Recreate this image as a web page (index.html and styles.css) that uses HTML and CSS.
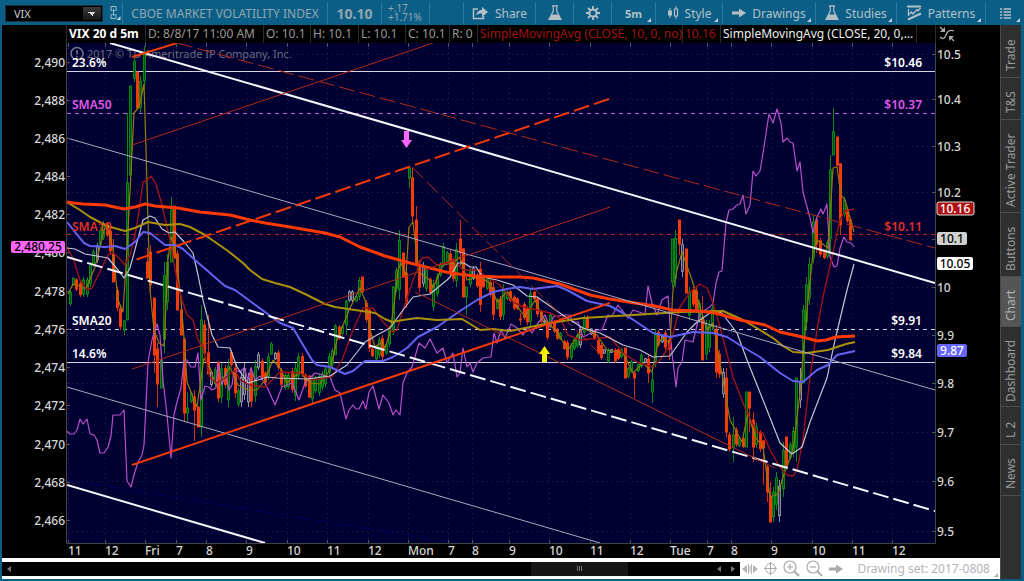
FILE: index.html
```
<!DOCTYPE html>
<html lang="en">
<head>
  <meta charset="UTF-8" />
  <meta name="viewport" content="width=device-width, initial-scale=1.0"/>
  <title>VIX Chart</title>
  <link rel="stylesheet" href="styles.css">
</head>
<body>
  <header class="toolbar">
    <div class="symbol">
      <select class="symbol-select" aria-label="Symbol">
        <option>VIX</option>
      </select>
      <button class="link-btn" aria-label="Link symbol">
        <svg width="12" height="16" viewBox="0 0 12 16" fill="none" stroke="#9dbccb">
          <path d="M3.500 5.500h-1.500v-4h5v4h-1.500M3.500 9.500h-1.500v4h5v-4h-1.500M4.500 4v7"/>
          <path d="M11.500 11v4h-4z" fill="#c4d3da" stroke="none"/>
        </svg>
      </button>
    </div>
    <div class="cell company">CBOE MARKET VOLATILITY INDEX</div>
    <div class="cell last">10.10</div>
    <div class="cell change"><span>+.17</span><span>+1.71%</span></div>
    <div class="cell"></div>
    <button class="cell tool">
      <svg width="17" height="14" viewBox="0 0 17 14" fill="none" stroke="#b4c0c6" stroke-width="1.5">
        <path d="M6 3H1.500v9.500h10V10"/>
        <path d="M4 9.500C5 5.500 7 4 10 4V1l6 5-6 5V7.500C7 7.500 5.500 8 4 9.500z" fill="#b4c0c6" stroke="none"/>
      </svg>
      Share
    </button>
    <button class="cell tool" aria-label="Studies setup">
      <svg width="14" height="16" viewBox="0 0 14 16" fill="none" stroke="#b4c0c6" stroke-width="1.2">
        <path d="M4 .8h6M5.300 1v5L1 14.500h12L8.700 6V1"/>
        <path d="M4 9.500h6l3 5.500H1z" fill="#b4c0c6" stroke="none"/>
      </svg>
    </button>
    <button class="cell tool" aria-label="Settings">
      <svg width="14" height="14" viewBox="0 0 14 14" fill="none" stroke="#b4c0c6">
        <circle cx="7" cy="7" r="3.600" stroke-width="2"/>
        <path d="M7 0v3M7 11v3M0 7h3M11 7h3M2 2l2.200 2.200M9.800 9.800L12 12M12 2L9.800 4.200M4.200 9.800L2 12" stroke-width="1.800"/>
      </svg>
    </button>
    <button class="cell tool more strong">5m</button>
    <button class="cell tool more">
      <svg width="12" height="14" viewBox="0 0 12 14" fill="none" stroke="#b4c0c6">
        <path d="M3 2v10M9 0v3M9 10v3"/>
        <path d="M1 4.500h4v5H1z" fill="#b4c0c6" stroke="none"/>
        <path d="M7.500 3h3v7h-3z" stroke-width="1.200"/>
      </svg>
      Style
    </button>
    <button class="cell tool more">
      <svg width="14" height="10" viewBox="0 0 14 10"><path d="M0 3.500h7V.5L14 5 7 9.500v-3H0z" fill="#b4c0c6"/></svg>
      Drawings
    </button>
    <button class="cell tool more">
      <svg width="14" height="16" viewBox="0 0 14 16" fill="none" stroke="#b4c0c6" stroke-width="1.2">
        <path d="M4 .8h6M5.300 1v5L1 14.500h12L8.700 6V1"/>
        <path d="M4 9.500h6l3 5.500H1z" fill="#b4c0c6" stroke="none"/>
      </svg>
      Studies
    </button>
    <button class="cell tool more">
      <svg width="15" height="16" viewBox="0 0 15 16" fill="none" stroke="#b4c0c6">
        <path d="M0 1.500h14" stroke-width="2"/>
        <path d="M1.500 4v6l3-3 1.500 2 4-4.500 1 1.500 2.500-3" stroke-width="1.300"/>
        <path d="M1 14.500L14 8.500" stroke-width="2"/>
      </svg>
      Patterns
    </button>
    <button class="cell tool more" aria-label="Menu">
      <svg width="11" height="11" viewBox="0 0 11 11" stroke="#b4c0c6" stroke-width="1.500"><path d="M0 1h2M0 4h2M0 7h2M0 10h2M3.500 1H11M3.500 4H11M3.500 7H11M3.500 10H11"/></svg>
    </button>
  </header>

  <div class="workspace">
    <main class="chart-panel">
      <div class="study-bar">
        <b class="title">VIX 20 d 5m</b>
        <span>D: 8/8/17 11:00 AM</span>
        <span>O: 10.1</span>
        <span>H: 10.1</span>
        <span>L: 10.1</span>
        <span>C: 10.1</span>
        <span>R: 0</span>
        <span class="sma10">SimpleMovingAvg (CLOSE, 10, 0, no)</span>
        <span class="sma10">10.16</span>
        <span class="sma20">SimpleMovingAvg (CLOSE, 20, 0,...</span>
        <span></span>
        <button class="fit-btn" aria-label="Fit chart">
          <svg width="17" height="16" viewBox="0 0 17 16" fill="none" stroke="#aaa" stroke-width="1.300">
            <path d="M1 11c3 3 5 1 6-2s3-6 8-4M1 1l4 4M15 15l-4-4"/>
            <path d="M6 1v5H1zM10 10h5l-5 5z" fill="#aaa" stroke="none"/>
          </svg>
        </button>
      </div>

      <svg class="chart" viewBox="2 43 998 515" role="img" aria-label="VIX five minute chart">
        <defs>
          <clipPath id="plot"><rect x="67" y="43" width="868" height="500"/></clipPath>
        </defs>
        <rect class="plot-bg" x="67" y="43" width="868" height="500"/>
        <g id="grid" class="grid"></g>
        <circle cx="77" cy="53.500" r="6" class="notice-ring"/>
        <path d="M77 50v4.500M77 56v1.500" class="notice-ring"/>
        <text class="copyright" x="87" y="58">2017 © TD Ameritrade IP Company, Inc.</text>

        <g clip-path="url(#plot)">
          <path class="level violet dash" d="M67 113.500H935"/>
          <path class="level red dash" d="M67 234.500H935"/>
          <path class="level dash" d="M67 329.500H935"/>
          <path class="level" d="M67 71.500H935M67 362.500H935"/>
          <path class="faint" d="M67 480L470 545"/>
          <g id="candles"></g>
          <g id="studies"></g>
          <path class="trend thin" d="M67 138L935 390M67 387L600 543"/>
          <path class="trend" d="M110 43L935 283M67 485L265 543"/>
          <path class="trend mid" d="M67 257L935 511"/>
          <path class="fork thin" d="M132 145L433 43M132 369L610 207M415 292L775 468"/>
          <path class="fork" d="M132 57L177 43M132 465L610 303"/>
          <path class="fork long" d="M609 99L132 261"/>
          <path class="fork thin long" d="M177 43L935 248M412 167L606 360"/>
        </g>
        <path fill="#ff66ff" d="M404 131h5v9h3l-5.500 8-5.500-8h3z"/>
        <path fill="#f4ee00" d="M542 362h5v-8h3l-5.500-8-5.500 8h3z"/>

        <g class="level-text">
          <text x="72" y="67">23.6%</text>
          <text x="72" y="109" class="t-violet">SMA50</text>
          <text x="72" y="231" class="t-red">SMA10</text>
          <text x="72" y="325">SMA20</text>
          <text x="72" y="358">14.6%</text>
        </g>
        <g class="level-text end">
          <text x="922" y="67">$10.46</text>
          <text x="922" y="109" class="t-violet">$10.37</text>
          <text x="922" y="231" class="t-red">$10.11</text>
          <text x="922" y="325">$9.91</text>
          <text x="922" y="358">$9.84</text>
        </g>
        <g id="axes" class="axis"></g>
        <path class="frame" d="M66.500 43V543.500H935.500V43"/>
        <g class="badges">
          <rect x="11" y="241" width="54" height="12" rx="2" fill="#ff66ff"/>
          <text x="38" y="251" fill="#000">2,480.25</text>
          <rect x="937" y="202" width="37" height="13" rx="2" fill="#b01010" stroke="#ddd"/>
          <text x="955" y="213" fill="#fff">10.16</text>
          <rect x="937" y="232" width="30" height="13" rx="2" fill="#d0d0d0"/>
          <text x="952" y="243" fill="#000">10.1</text>
          <rect x="937" y="257" width="36" height="13" rx="2" fill="#fff"/>
          <text x="955" y="268" fill="#000">10.05</text>
          <rect x="937" y="344" width="30" height="13" rx="2" fill="#6666ff"/>
          <text x="952" y="355" fill="#fff">9.87</text>
        </g>
      </svg>

      <footer class="bottom-bar">
        <div class="scroll">
          <button class="scroll-btn" aria-label="First"><svg width="5" height="6"><path d="M4 0v6L0 3z" fill="#777"/></svg></button>
          <div class="track"><div class="thumb"><i></i><i></i><i></i></div></div>
          <button class="scroll-btn" aria-label="Back"><svg width="5" height="6"><path d="M4 0v6L0 3z" fill="#777"/></svg></button>
          <button class="scroll-btn" aria-label="Forward"><svg width="5" height="6"><path d="M0 0v6l4-3z" fill="#777"/></svg></button>
        </div>
        <div class="zoom-tools">
          <button aria-label="Pan"><svg width="16" height="10" viewBox="0 0 16 10" fill="#b4b4b4"><path d="M5 1v8L0 5zM11 1v8l5-4zM6 0h1v10H6zM9 0h1v10H9zM7.500 2h1v6h-1z"/></svg></button>
          <button aria-label="Crosshair"><svg width="13" height="13" viewBox="0 0 13 13" fill="none" stroke="#aaa"><circle cx="6.500" cy="6.500" r="5"/><path d="M6.500 0v13M0 6.500h13"/></svg></button>
          <button aria-label="Zoom in"><svg width="17" height="17" viewBox="0 0 17 17" fill="none" stroke="#aaa" stroke-width="1.200"><circle cx="7" cy="7" r="6"/><path d="M7 4v6M4 7h6"/><path d="M11.500 11.500L16 16" stroke-width="2"/></svg></button>
          <button aria-label="Zoom out"><svg width="17" height="17" viewBox="0 0 17 17" fill="none" stroke="#aaa" stroke-width="1.200"><circle cx="7" cy="7" r="6"/><path d="M4 7h6"/><path d="M11.500 11.500L16 16" stroke-width="2"/></svg></button>
          <button aria-label="Go to latest"><svg width="14" height="10" viewBox="0 0 14 10"><path d="M0 3.500h7V.5L14 5 7 9.500v-3H0z" fill="#aaa"/></svg></button>
          <button class="drawing-set more">Drawing set: 2017-0808</button>
        </div>
      </footer>
    </main>

    <nav class="side-tabs">
      <button class="h-trade">Trade</button>
      <button class="h-ts">T&amp;S</button>
      <button class="h-active">Active Trader</button>
      <button class="h-buttons">Buttons</button>
      <button class="h-chart selected">Chart</button>
      <button class="h-dash">Dashboard</button>
      <button class="h-l2">L 2</button>
      <button class="h-news">News</button>
    </nav>
  </div>

  <script src="chart.js"></script>
</body>
</html>
```
FILE: styles.css
```
* {
  box-sizing: border-box;
}

body {
  margin: 0;
  min-height: 100vh;
  display: flex;
  flex-direction: column;
  background: #0b5f87;
  font-family: "Noto Sans", "Open Sans", sans-serif;
  font-size: 12px;
}

button {
  margin: 0;
  padding: 0;
  border: none;
  background: none;
  color: inherit;
  font: inherit;
}

svg {
  display: block;
  flex: none;
}

.toolbar {
  display: grid;
  grid-template-columns: 122px 205px 54px 48px 1fr 72px 38px 38px 44px 67px 93px 81px 89px 39px;
  height: 25px;
  padding: 2px 0 1px;
  color: #b4c0c6;
}

.symbol {
  display: flex;
  align-items: center;
  gap: 6px;
  padding-left: 5px;
}

/* first layer is the down arrow, second its button */
.symbol-select {
  appearance: none;
  width: 98px;
  height: 17px;
  padding: 0 8px;
  border: 1px solid #1c2f38;
  border-radius: 0;
  background-color: #000;
  background-image: conic-gradient(from -45deg at 50% 100%, #ddd 90deg, transparent 0), linear-gradient(#3a3a3a, #161616);
  background-repeat: no-repeat;
  background-size: 8px 4px, 18px 13px;
  background-position: 82px 6px, 77px 1px;
  color: #ccc;
  font: inherit;
  font-size: 11px;
}

.cell {
  display: flex;
  align-items: center;
  justify-content: center;
  gap: 6px;
  border-left: 1px solid #2d7899;
  white-space: nowrap;
}

.company,
.last,
.change {
  color: #93a5ae;
}

.last {
  font-size: 14px;
  font-weight: bold;
}

.change {
  flex-direction: column;
  align-items: flex-start;
  gap: 0;
  padding-left: 6px;
  font-size: 10px;
  line-height: 9px;
}

.strong {
  font-size: 11px;
  font-weight: bold;
}

.more {
  position: relative;
}

.more::after {
  content: "";
  position: absolute;
  right: 4px;
  bottom: 2px;
  border-left: 4px solid transparent;
  border-bottom: 4px solid #c4d0d6;
}

.workspace {
  flex: 1;
  display: flex;
  padding: 0 3px 2px 2px;
}

.chart-panel {
  flex: 1;
  min-width: 0;
  background: #000;
}

.study-bar {
  display: grid;
  grid-template-columns: 79px 118px 47px 48px 47px 44px 28px 205px 38px 196px 1fr 65px;
  height: 18px;
  padding-left: 64px;
  color: #999;
  line-height: 18px;
  white-space: nowrap;
}

.study-bar > * {
  padding-left: 2px;
  border-left: 1px solid #2c2c2c;
}

.title {
  color: #fff;
}

.study-bar .sma10 {
  color: #a01414;
}

.study-bar .sma20 {
  color: #eee;
}

.fit-btn {
  display: flex;
  align-items: center;
  padding-left: 3px;
}

.chart {
  width: 100%;
  height: auto;
  overflow: visible;
}

.plot-bg {
  fill: #000033;
}

.grid path {
  fill: none;
  stroke: #252540;
  stroke-dasharray: 1 4;
}

.notice-ring {
  fill: none;
  stroke: #777788;
  stroke-width: 1.5;
}

.copyright {
  fill: #6c6c80;
  font-size: 11px;
}

.level {
  stroke: #d4d4e0;
}

.level.violet {
  stroke: #c456d0;
}

.level.red {
  stroke: #c02418;
}

.level.dash {
  stroke-dasharray: 4 4;
}

.faint {
  stroke: #000058;
  stroke-dasharray: 16 5;
}

.trend {
  fill: none;
  stroke: #f4f4fa;
  stroke-width: 2;
}

.trend.thin {
  stroke: #a8a8bc;
  stroke-width: 1;
}

.trend.mid {
  stroke-dasharray: 16 5;
}

.fork {
  fill: none;
  stroke: #f03a08;
  stroke-width: 2;
}

.fork.thin {
  stroke: #b02c18;
  stroke-width: 1;
}

.fork.long {
  stroke-dasharray: 16 5;
}

.study {
  fill: none;
  stroke-linejoin: round;
}

.level-text,
.badges {
  font-size: 12px;
  font-weight: 600;
  fill: #fff;
}

.end {
  text-anchor: end;
}

.level-text .t-violet {
  fill: #e05ae8;
}

.level-text .t-red {
  fill: #e03020;
}

.badges {
  font-weight: 500;
  text-anchor: middle;
}

.axis {
  fill: #d6d6d6;
  font-size: 12px;
  font-weight: 500;
}

.frame {
  fill: none;
  stroke: #444;
}

.bottom-bar {
  display: flex;
  align-items: center;
  height: 21px;
  background: #fff;
}

.scroll {
  flex: 1;
  display: flex;
  align-items: center;
  height: 14px;
  background: #000;
}

.scroll-btn {
  width: 14px;
  display: flex;
  justify-content: center;
}

.track {
  flex: 1;
  height: 14px;
}

.thumb {
  display: flex;
  align-items: center;
  justify-content: center;
  gap: 1px;
  width: 14%;
  height: 14px;
  margin-left: 74%;
  background: #161616;
}

.thumb i {
  width: 1px;
  height: 5px;
  background: #777;
}

.zoom-tools {
  display: flex;
  align-items: center;
  gap: 6px;
  width: 260px;
  padding-left: 2px;
  color: #b4b4b4;
}

.drawing-set {
  flex: 1;
  padding-right: 10px;
  text-align: right;
  white-space: nowrap;
}

.drawing-set::after {
  right: 2px;
  bottom: 0;
  border-bottom-color: #aaa;
}

.side-tabs {
  display: flex;
  flex-direction: column;
  width: 21px;
  border-left: 1px solid #4a4a4a;
  background: #2f2f2f;
  color: #9a9a9a;
}

/* tabs read bottom to top, so borders and padding are flipped too */
.side-tabs button {
  writing-mode: vertical-rl;
  transform: rotate(180deg);
  width: 20px;
  padding-bottom: 8px;
  border-top: 1px solid #4d4d4d;
  line-height: 18px;
  text-align: center;
  white-space: nowrap;
}

.side-tabs .selected {
  background: #555;
  color: #b0b0b0;
}

.h-trade { height: 53px; }
.h-ts { height: 42px; }
.h-active { height: 93px; }
.h-buttons { height: 64px; }
.h-chart { height: 50px; }
.h-dash { height: 80px; }
.h-l2 { height: 38px; }
.h-news { height: 51px; }
```
FILE: chart.js
```
const svgNS = "http://www.w3.org/2000/svg";

function add(parent, name, attrs, text) {
  const el = document.createElementNS(svgNS, name);
  for (const key in attrs) el.setAttribute(key, attrs[key]);
  if (text) el.textContent = text;
  document.getElementById(parent).appendChild(el);
}

// time axis: [x, label]
const times = [
  [68, "11"], [105, "12"], [145, "Fri"], [176, "7"], [206, "8"], [246, "9"], [287, "10"], [327, "11"],
  [368, "12"], [408, "Mon"], [448, "7"], [472, "8"], [509, "9"], [549, "10"], [590, "11"], [630, "12"],
  [670, "Tue"], [707, "7"], [731, "8"], [771, "9"], [812, "10"], [852, "11"], [892, "12"]
];

// price axis on the right: [y, label]
const prices = [
  [54, "10.5"], [99, "10.4"], [146, "10.3"], [192, "10.2"], [239, ""], [287, "10"],
  [335, "9.9"], [383, "9.8"], [432, "9.7"], [481, "9.6"], [531, "9.5"]
];

// futures axis on the left
const futures = [
  [62, "2,490"], [100, "2,488"], [138, "2,486"], [176, "2,484"], [214, "2,482"], [252, "2,480"], [291, "2,478"],
  [329, "2,476"], [367, "2,474"], [405, "2,472"], [444, "2,470"], [482, "2,468"], [520, "2,466"]
];

times.forEach(([x, label]) => {
  add("grid", "path", { d: `M${x + 0.5} 43V543` });
  add("axes", "path", { d: `M${x + 0.5} 43v4M${x + 0.5} 540v3`, stroke: "#555" });
  add("axes", "text", { x: x, y: 555 }, label);
});
prices.forEach(([y, label]) => {
  add("grid", "path", { d: `M67 ${y + 0.5}H935` });
  add("axes", "path", { d: `M932 ${y + 0.5}h3`, stroke: "#555" });
  if (label) add("axes", "text", { x: 937, y: y + 5 }, label);
});
futures.forEach(([y, label]) => {
  add("axes", "path", { d: `M67 ${y + 0.5}h3`, stroke: "#555" });
  add("axes", "text", { x: 65, y: y + 5, "text-anchor": "end" }, label);
});

// candles: x, colour, high, low and, where known, body top and bottom
const candles = `
70g290,306 73g277,286 76r278,291 80r281,297 83g277,297 87g277,297 90g262,287 93g249,267 97w243,263 100g228,247
103g221,240 107r223,237 110r227,255 113r239,282,254,282 117r287,311 120r305,330 124g320,335,321,330
127g113,320,183,320 130g86,175,86,175 134g58,82 137r72,108,72,108 140g76,113 144g46,87 147r248,278,262,278 150r245,292
154r298,373,298,355 157r343,407,349,384 161g350,388,360,388 164g262,353 167g254,310 171g197,262,210,262
174r206,258,206,258 177r250,310,254,310 181r310,335,310,335 184r339,422,339,413 187g392,422,408,413 191g392,403
194r390,441,397,410 198r407,427,407,427 201g305,437,320,427 204r320,353,325,353 208r315,374,353,374
211w370,387 215g367,387 218r362,402,362,398 221g363,403 225r365,388 228g359,407 231r350,367 235r363,398
238g388,407 241w372,407 244w363,400 248w373,407 251r367,407 255g360,402 258w352,370 262r358,380 265r371,384 268g353,380
271g342,355,344,354 275w352,360 278r350,370 281r368,387 285g373,390 288g373,389 292r368,393 295g363,401 298g353,380
302r353,377 305r373,388 309r375,398,376,397 312g375,403 315g376,393 319g373,396 322g371,390 325g366,387 329g353,376
332g348,367 335g324,355,326,355 339r325,340 342g325,335 346g300,335,301,325 349w290,302 352w290,302 356g296,302
359g277,300 362r277,292,277,292 366r300,323 369r310,352,310,348 372r348,357 376g346,361 379g337,358 382r335,360
386g343,355 389g326,347 393g286,335,287,330 396g267,292 399g230,300 403r253,277,253,277 406r267,308 409g168,188,168,178
412r168,222,178,216 416r206,266,220,263 419r260,292 423w262,287 426g267,292 430r277,295 433g280,311 437g273,297 440g262,277
443g243,267 447g251,263 450r250,277 453r258,282 456g243,287 460r220,266,239,253 463r248,297,249,297 466g287,315,287,297
470g268,287 473w267,280 477r273,288 480r262,312 483r277,288 487g277,290 490r280,297 493r282,320 497g298,310 500r296,320
503g284,320 507g291,300 510r290,302 514r295,310 517r297,310 520r313,325,319,320 524r302,320 527r306,325 530g288,327
534r291,300 537r296,317 541r310,323 544w318,326,321,322 547r320,340 550g313,328 554r320,333 557r328,340 560g332,340 564r340,350
567r340,360 571g343,360 574g338,350 577g333,348 580w327,348 584g315,335 587r315,330 591w328,335 594r330,340 598r338,355
601r343,360 604w349,354 608g348,363 611w349,353 615r348,363 618r348,360 621g348,358 625r348,378,348,378 628g367,378 631g360,373
634r373,398,373,378 638g363,372 641g353,368 645w358,363 648r355,383,359,373 652g365,403,380,392 655g329,367 658r330,347
662w335,343 665r330,350 669r337,360,340,349 672g239,287,239,282 675g230,287 679r220,255,220,244 682w239,277 686r249,293,249,293
689g287,320 693r287,307 696r287,313 699g300,323 702r296,360,318,360 706g320,360 709g320,352 712g305,330 716r325,378,330,372
719r350,378 723w368,398 726r368,437,378,432 729r432,452 733g417,462,435,447 736r427,447 739g437,447 743r437,448
746g392,447,392,447 749r392,432,392,408 753r412,462,420,447 756g423,448 760r430,452 763r440,485,441,448 767r465,502,467,492
770r482,522,496,522 773g487,522 776g472,510 779w480,522 783g442,497 786r437,467,437,467 790g442,460 793g427,457
796g378,462,378,447 800w368,408,383,400 803g305,383,310,383 806g277,330 809g257,305 813g215,263,222,258 816r217,253,220,244
820r238,257 824r249,259 827g240,259 830g155,253 833g108,155,132,155 837r137,167,137,165 840r163,235,164,225 844g197,217
847r207,223 850r217,240,220,240`.trim().split(/\s+/);

const colours = { g: "#0aa014", r: "#f53a08", w: "#a8a8b8" };

candles.forEach(item => {
  const [, x, type, rest] = item.match(/^(\d+)([grw])(.+)$/);
  const [high, low, t, b] = rest.split(",").map(Number);
  const inset = (low - high) * 0.15;
  const top = t || high + inset;
  const bottom = b || low - inset;
  const cx = Number(x) + 0.5;
  add("candles", "path", { d: `M${cx} ${high}V${low}`, stroke: colours[type], opacity: 0.85 });
  add("candles", "rect", {
    x: cx - 1, y: top, width: 2, height: Math.max(1, bottom - top),
    fill: type === "g" ? "#024a10" : type === "w" ? "#333350" : colours.r,
    stroke: colours[type], "stroke-width": type === "r" ? 1 : 0.8
  });
});

const studies = [
  // futures overlay
  ["#b850c8", 1.2, `67,431 70,434 74,434 77,430 80,419 83,424 87,419 90,434 94,435 97,440 100,453 104,453 108,447 111,436
  113,415 120,415 124,410 127,481 131,487 134,475 138,462 142,455 144,445 146,405 148,362 152,340 157,324 160,335 163,380
  167,415 171,458 174,415 177,402 181,388 184,360 187,360 191,367 195,367 198,353 201,400 205,386 209,387 212,390 216,388
  218,363 222,385 226,372 229,390 232,385 234,370 240,372 244,368 248,380 251,368 255,380 260,376 267,387 275,405 282,387
  292,383 299,400 305,383 315,373 330,377 335,390 340,393 346,419 349,410 353,405 356,409 359,409 363,401 366,409 369,392
  373,386 379,409 383,395 389,403 393,415 396,410 400,415 403,383 407,373 412,367 419,343 425,348 430,339 437,353 443,348
  447,363 453,353 457,377 460,373 463,348 467,367 470,363 473,372 477,363 483,358 491,357 494,333 497,343 501,330 505,338
  511,324 517,328 523,335 528,327 532,333 538,323 545,315 550,327 553,317 563,315 570,315 572,322 578,322 583,337 597,330
  602,330 608,315 612,316 618,305 628,318 633,310 645,314 648,286 652,303 657,315 662,300 668,296 672,353 676,387 678,368
  682,362 685,340 693,342 700,313 710,307 713,303 716,283 719,272 722,271 726,223 729,210 733,209 737,205 740,204 743,195
  746,214 750,205 753,171 756,176 760,171 763,153 769,114 773,123 777,109 781,123 783,142 787,138 790,142 793,143 797,171
  800,162 803,192 807,207 810,218 813,233 817,217 821,209 823,214 827,204 830,257 834,267 837,266 840,248 844,237 847,242
  851,243 854,247`],
  // fast average
  ["#937c08", 1.2, `68,294 73,284 80,286 86,289 95,267 104,230 108,225 113,250 118,300 123,312 127,250 134,113 139,107
  144,84 146,150 150,290 154,330 159,343 164,346 168,260 171,237 175,247 181,300 185,350 187,382 197,407 204,358 210,368
  215,383 222,380 230,367 238,385 248,390 257,390 265,380 273,360 280,368 287,383 300,372 310,383 320,384 330,370 337,340
  350,308 360,288 365,300 370,330 375,347 382,342 385,348 390,333 395,297 398,270 401,263 406,275 409,227 413,222 417,257
  420,273 430,280 433,288 443,265 453,263 460,257 467,280 480,277 490,283 497,302 507,292 525,317 535,300 543,318 557,332
  568,350 583,328 597,335 607,350 623,353 633,373 643,363 652,372 658,343 663,338 670,343 673,290 677,270 682,252 692,280
  700,307 707,330 713,323 720,363 730,420 742,442 748,413 755,437 763,447 770,497 778,494 783,477 793,450 800,393 807,310
  813,253 817,240 828,248 833,168 837,167 841,195 845,200 854,232`],
  // 10 bars
  ["#9c1414", 1.4, `67,247 73,258 80,280 87,290 92,288 103,265 108,255 113,253 119,258 125,265 130,255 135,235 138,218
  143,182 147,180 151,176 156,184 162,205 170,240 177,280 182,300 187,315 193,320 198,340 203,347 210,378 217,383 225,378
  235,370 240,380 250,385 265,387 280,372 300,373 313,380 332,377 342,360 353,330 363,308 373,308 383,322 393,332 397,330
  403,310 413,280 422,258 428,257 437,265 447,263 453,260 463,270 477,270 487,277 500,285 513,302 523,307 533,309 550,313
  560,318 568,335 580,340 610,337 623,353 637,362 652,367 660,360 670,345 680,307 690,292 700,284 707,288 713,303 720,327
  733,377 747,413 757,432 763,433 770,450 780,467 787,475 793,476 797,470 803,440 810,377 817,330 823,297 832,257 840,220
  845,211 854,209`],
  // 20 bars
  ["#c4c4d0", 1.2, `67,248 75,249 85,254 108,258 118,270 124,278 130,268 143,220 150,216 155,218 162,229 169,233 175,232
  185,243 193,253 198,275 203,300 212,335 218,347 230,348 237,367 248,383 258,380 267,377 277,378 307,379 330,376 347,365
  365,342 377,335 390,328 403,310 413,297 430,294 447,280 450,277 458,263 464,263 470,267 476,267 483,277 497,280 513,285
  527,296 537,297 567,318 583,328 600,333 623,345 640,350 653,357 670,356 687,332 697,322 713,311 722,313 737,333 747,360
  763,400 780,443 792,454 802,447 810,422 827,378 835,340 847,290 854,264`],
  // 50 bars
  ["#6262f0", 2, `67,222 75,232 84,243 90,246 105,247 115,246 125,249 135,242 143,232 150,233 165,245 175,245 183,249
  195,260 225,286 235,290 250,301 280,323 293,328 312,360 317,365 330,367 345,374 353,371 365,361 383,361 393,357 407,348
  418,337 437,327 460,311 477,300 493,292 507,289 520,287 533,289 557,286 567,290 587,301 610,306 623,313 653,333 670,337
  693,332 713,333 727,337 743,347 760,357 780,373 793,381 803,382 817,370 828,365 837,355 846,353 855,351`],
  // 100 bars
  ["#ac9008", 2, `67,202 80,210 90,217 107,226 125,231 135,228 148,222 165,225 180,224 190,227 205,235 228,251 243,263
  250,270 262,279 275,283 290,287 305,294 325,304 335,307 355,310 375,313 385,319 392,322 403,320 417,318 437,320 462,319
  480,330 493,329 510,331 520,329 550,323 583,318 633,315 680,312 723,311 743,320 760,330 773,338 783,346 793,352 807,353
  828,350 837,347 846,344 855,342`],
  // 200 bars
  ["#ff3a00", 3, `67,202 74,203 83,204 105,205 124,209 135,207 145,204 155,206 178,208 200,212 230,215 250,220 265,223
  290,227 325,233 340,237 360,247 385,256 410,263 430,268 450,273 475,276 500,277 520,277 533,278 560,284 590,295 610,299
  635,303 655,306 672,310 700,311 715,313 740,320 765,325 780,332 798,336 810,339 817,341 826,340 836,337 855,336`]
];

studies.forEach(([stroke, width, points]) => {
  add("studies", "polyline", { class: "study", points: points, stroke: stroke, "stroke-width": width });
});
```
